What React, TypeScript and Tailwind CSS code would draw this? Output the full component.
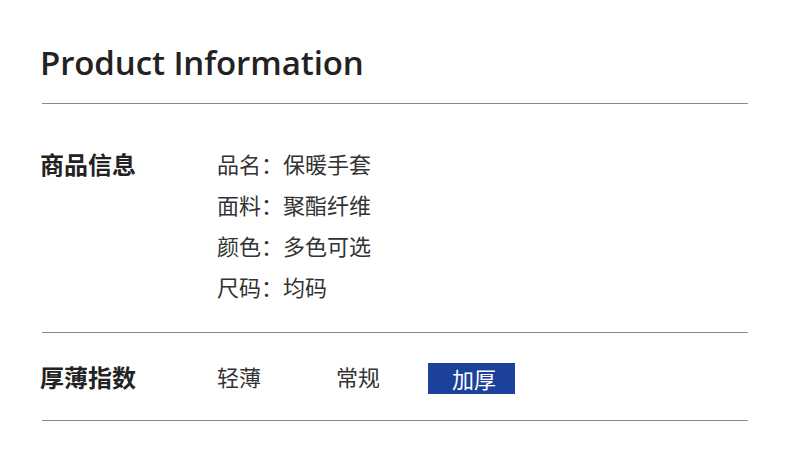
const cjk = "font-['Noto_Sans_CJK_SC',sans-serif]";

const specs = [
  ["品名", "保暖手套"],
  ["面料", "聚酯纤维"],
  ["颜色", "多色可选"],
  ["尺码", "均码"],
];

export default function App() {
  return (
    <div className="w-[790px] h-[467px] bg-white px-[42px] text-[#222]">
      {/* Header */}
      <div className="h-[104px] flex items-end pb-[24px] border-b border-[#8a8a8a]">
        <h1 className="-ml-[2px] text-[33px] leading-none font-semibold font-['Open_Sans',sans-serif] tracking-[-0.1px]">
          Product Information
        </h1>
      </div>

      {/* 商品信息 */}
      <div className={`flex pt-[39px] pb-[25px] border-b border-[#8a8a8a] ${cjk}`}>
        <div className="w-[177px] -ml-[2px] h-[41px] flex items-center text-[24px] font-bold">
          商品信息
        </div>
        <div className="flex flex-col">
          {specs.map(([k, v]) => (
            <div key={k} className="h-[41px] flex items-center text-[22px] text-[#333]">
              {k}：{v}
            </div>
          ))}
        </div>
      </div>

      {/* 厚薄指数 */}
      <div className={`h-[88px] flex items-center border-b border-[#8a8a8a] ${cjk}`}>
        <div className="w-[177px] -ml-[2px] text-[24px] font-bold">厚薄指数</div>
        <div className="w-[119px] text-[22px] text-[#333]">轻薄</div>
        <div className="w-[92px] text-[22px] text-[#333]">常规</div>
        <div className="w-[87px] h-[31px] mt-[4px] pl-[5px] flex items-center justify-center bg-[#1b419a] text-white text-[22px]">
          加厚
        </div>
      </div>
    </div>
  );
}
